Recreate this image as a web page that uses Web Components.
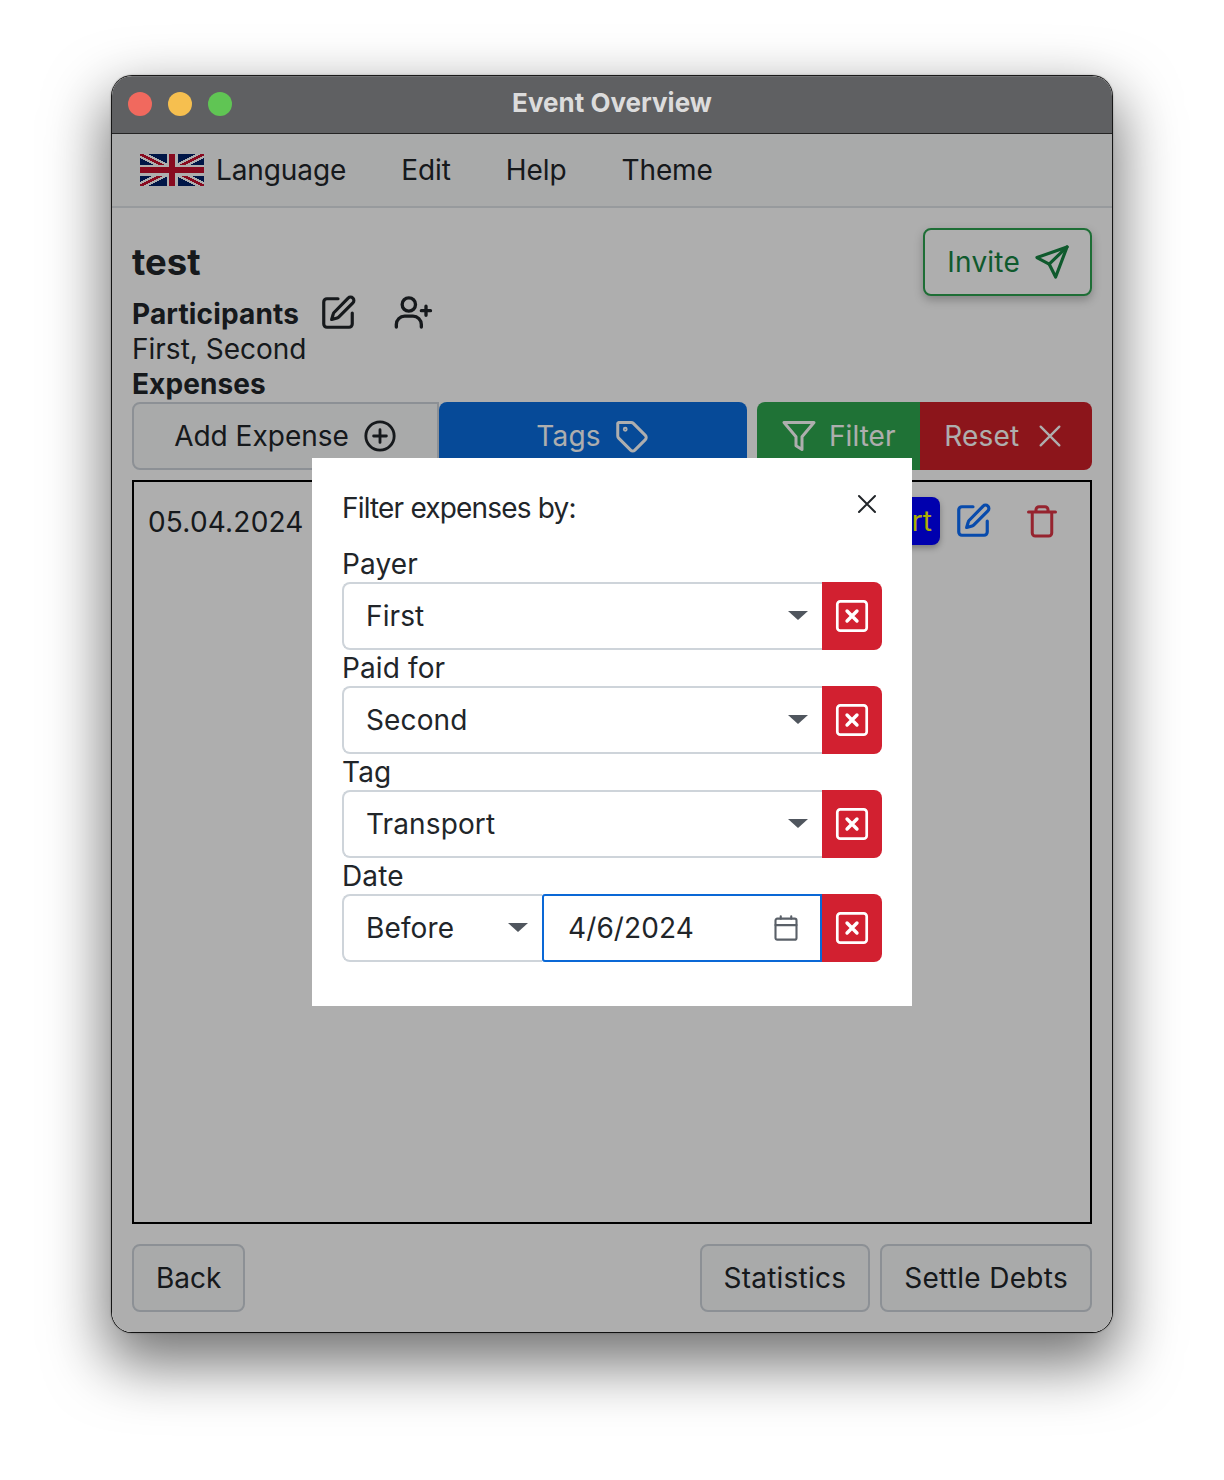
<!DOCTYPE html>
<html lang="en"><head><meta charset="utf-8"><title>Event Overview</title>
<style>
html,body{margin:0;background:#fff}
body{font-family:Inter,"Liberation Sans",sans-serif;font-optical-sizing:none;color:#212529;height:1480px;display:flex;justify-content:center;align-items:flex-start;padding-top:76px;box-sizing:border-box;overflow:hidden}
</style></head><body>
<x-window>
  <x-titlebar>Event Overview</x-titlebar>
  <x-menubar>
    <x-flag slot="flag"></x-flag>
    <x-menuitem first>Language</x-menuitem>
    <x-menuitem>Edit</x-menuitem>
    <x-menuitem>Help</x-menuitem>
    <x-menuitem>Theme</x-menuitem>
  </x-menubar>
  <x-overview></x-overview>
  <x-filter-modal slot="overlay"></x-filter-modal>
</x-window>
<script>
const I={
 pen:'<path d="M12 3H5a2 2 0 0 0-2 2v14a2 2 0 0 0 2 2h14a2 2 0 0 0 2-2v-7"/><path d="M18.4 2.6a2.1 2.1 0 0 1 3 3l-9 9a2 2 0 0 1-.9.5l-3.500 1 1-3.500a2 2 0 0 1 .5-.9z"/>',
 user:'<circle cx="9.500" cy="7.500" r="4"/><path d="M2 21v-1.500a5 5 0 0 1 5-5h5a5 5 0 0 1 5 5V21"/><path d="M19.800 8.500v5.500M17 11.200h5.500"/>',
 send:'<path d="M21.500 2.500 2.500 9.200l7.700 4.100 4.100 8.200z"/><path d="M21.500 2.500 10.200 13.300"/>',
 plus:'<circle cx="12" cy="12" r="10"/><path d="M12 7.500v9M7.500 12h9"/>',
 tag:'<path d="M3 3h8.500a2 2 0 0 1 1.400.6l8 8a2 2 0 0 1 0 2.800l-7 7a2 2 0 0 1-2.800 0l-8-8A2 2 0 0 1 2.500 12V3.500z"/><circle cx="7.500" cy="7.500" r=".6"/>',
 funnel:'<path d="M2 3h20l-8 9.500V21l-4-2.500v-6z"/>',
 x:'<path d="M4 4l16 16M20 4 4 20"/>',
 trash:'<path d="M3 6h18M8 6V4.500A2 2 0 0 1 10 2.500h4a2 2 0 0 1 2 2V6M5.500 6v14a2 2 0 0 0 2 2h9a2 2 0 0 0 2-2V6"/>',
 cal:'<rect x="3" y="4" width="18" height="18" rx="1.500"/><path d="M3 9.500h18M7.500 2v2M16.500 2v2"/>',
 xsq:'<rect x="2.200" y="2.200" width="19.600" height="19.600" rx="2"/><path stroke-width="2.300" d="M8.700 8.700l6.600 6.600M15.300 8.700l-6.600 6.600"/>'
};
const ico=(n,s,w=2)=>`<svg width="${s}" height="${s}" viewBox="0 0 24 24" fill="none" stroke="currentColor" stroke-width="${w}" stroke-linecap="round" stroke-linejoin="round" aria-hidden="true">${I[n]}</svg>`;
function def(name,html){
  customElements.define(name,class extends HTMLElement{
    constructor(){super();const r=this.attachShadow({mode:'open'});if(typeof html!=='function')r.innerHTML=html;}
    connectedCallback(){if(!this.__d&&typeof html==='function'){this.__d=1;this.shadowRoot.innerHTML=html(this);}}
  });
}
def('x-window',`<style>
:host{display:flex;flex-direction:column;position:relative;width:1000px;height:1256px;border-radius:20px;background:#fff;
 box-shadow:0 0 0 1px rgba(0,0,0,.85),0 0 2px 1px rgba(0,0,0,.3),0 26px 60px 6px rgba(0,0,0,.55)}
.clip{display:flex;flex-direction:column;flex:1;min-height:0;border-radius:20px;overflow:hidden;position:relative}
.over{position:absolute;left:0;right:0;top:58px;bottom:0;background:rgba(0,0,0,.318);display:flex;flex-direction:column;align-items:center;padding-top:324px;box-sizing:border-box}
</style><div class="clip"><slot></slot><div class="over"><slot name="overlay"></slot></div></div>`);
def('x-titlebar',`<style>
:host{display:flex;align-items:center;justify-content:center;position:relative;height:57px;flex:none;background:#5f6062;border-bottom:1px solid #242424;color:#dcdcdc;font:700 26px/1 Inter,sans-serif;font-optical-sizing:auto;box-shadow:inset 0 1px 0 rgba(255,255,255,.12)}
.l{position:absolute;left:16px;top:16px;display:flex;gap:16px}
i{display:block;width:24px;height:24px;border-radius:50%}
.t{margin-top:-4px}
</style><div class="l"><i style="background:#f1695e"></i><i style="background:#f6bf4f"></i><i style="background:#60c554"></i></div><div class="t"><slot></slot></div>`);
def('x-menubar',`<style>
:host{display:flex;align-items:center;flex:none;height:74px;box-sizing:border-box;background:#f8f9fa;border-bottom:2px solid #dee2e6;padding:0 0 0 28px;font:28px/1 Inter,sans-serif;letter-spacing:-.1px;color:#212529}
::slotted(x-flag){margin-right:12px}
.g{display:flex;align-items:center;gap:55px}
</style><slot name="flag"></slot><div class="g"><slot></slot></div>`);
def('x-menuitem',`<style>:host{display:block;margin-top:-1px}</style><slot></slot>`);
def('x-flag',`<style>:host{display:block;width:64px;height:32px;line-height:0}</style>
<svg width="64" height="32" viewBox="0 0 64 32" shape-rendering="crispEdges"><rect width="64" height="32" fill="#012169"/>
<path d="M0 0 64 32M64 0 0 32" stroke="#fff" stroke-width="7"/><path d="M0 0 30 15M34 17 64 32M64 0 35 14.500M29 17.500 0 32" stroke="#c8102e" stroke-width="2.500"/>
<path d="M32 0v32M0 16h64" stroke="#fff" stroke-width="11"/><path d="M32 0v32M0 16h64" stroke="#c8102e" stroke-width="6.500"/></svg>`);
def('x-btn',h=>{
 const i=h.getAttribute('icon'),s=h.getAttribute('size')||32,w=h.getAttribute('sw')||2,lead=h.hasAttribute('lead');
 const svg=i?ico(i,s,w):'';
 return `<style>
:host{display:flex;align-items:center;justify-content:center;gap:${h.getAttribute('gap')||14}px;height:68px;min-width:0;box-sizing:border-box;padding:0 22px;font:28px/1 Inter,sans-serif;letter-spacing:.22px;border:2px solid transparent;border-radius:${h.getAttribute('r')||'8px'};white-space:nowrap;flex:${h.hasAttribute('grow')?'1 1 0':'none'}}
:host([v=sec]){background:#f8f9fa;border-color:#ced4da;color:#212529}
:host([v=inv]){background:#fff;border-color:#2da24f;color:#178443;box-shadow:0 4px 10px rgba(0,0,0,.25)}
:host([v=blue]){background:#0a6ddf;color:#fff}
:host([v=green]){background:#2ea84f;color:#fff}
:host([v=red]){background:#ce1f28;color:#fff}
svg{display:block;flex:none}
</style>${lead?svg:''}<slot></slot>${lead?'':svg}`});
def('x-overview',`<style>
:host{display:flex;flex-direction:column;flex:1;min-height:0;background:#fff;padding:20px;box-sizing:border-box;font:28px/35px Inter,sans-serif;color:#212529}
.head{display:flex;justify-content:space-between;align-items:flex-start;height:174px;flex:none}
h1{font:700 36.500px/36px Inter,sans-serif;margin:16px 0 17px}
.r{display:flex;align-items:center;font-weight:700;height:35px;letter-spacing:.15px}
.r span{margin-right:20px}.r svg{display:block;margin-top:-4px}
.r svg+svg{margin-left:36px;margin-top:-6px}
b{display:block;font-weight:700;letter-spacing:.1px}
.bar{display:flex;gap:10px;flex:none}
.left{display:flex;width:615px;flex:none}.right{display:flex;flex:1;min-width:0}
.list{flex:1;min-height:0;border:2px solid #000;margin:10px 0 20px;box-sizing:border-box;padding:15px 14px;display:flex;align-items:flex-start}
.date{margin-top:8px;flex:none;letter-spacing:.2px}
.end{margin-left:auto;display:flex;align-items:center}
.badge{background:#0000ff;color:#ffff00;border-radius:8px;height:48px;line-height:48px;padding:0 8px;box-shadow:0 3px 6px rgba(0,0,0,.3)}
.ed{color:#0d6efd;margin-left:14px}.tr{color:#dc3545;margin-left:32px;margin-right:16px}
.ed svg,.tr svg{display:block}
.foot{display:flex;gap:10px;flex:none}.sp{flex:1}
</style>
<div class="head"><div><h1>test</h1><div class="r"><span>Participants</span>${ico('pen',38,2)}${ico('user',40,2)}</div><div>First, Second</div><b>Expenses</b></div>
<x-btn v="inv" icon="send" size="38" sw="2" gap="13" style="padding-right:19px">Invite</x-btn></div>
<div class="bar"><div class="left"><x-btn v="sec" icon="plus" size="34" gap="14" grow r="8px 0 0 8px" style="flex:0 0 307px;letter-spacing:0">Add Expense</x-btn><x-btn v="blue" icon="tag" size="36" grow r="8px 8px 0 0" gap="13">Tags</x-btn></div>
<div class="right"><x-btn v="green" icon="funnel" size="36" lead gap="12" r="8px 0 0 8px" style="letter-spacing:.05px">Filter</x-btn><x-btn v="red" icon="x" size="28" grow r="0 8px 8px 0" gap="17" style="padding-right:25px">Reset</x-btn></div></div>
<div class="list"><div class="date">05.04.2024</div><div class="end"><div class="badge">Transport</div><div class="ed">${ico('pen',38,2)}</div><div class="tr">${ico('trash',36,2)}</div></div></div>
<div class="foot"><x-btn v="sec" style="letter-spacing:0">Back</x-btn><div class="sp"></div><x-btn v="sec">Statistics</x-btn><x-btn v="sec" style="letter-spacing:.3px">Settle Debts</x-btn></div>`);
def('x-select',`<style>
:host{display:flex;align-items:center;flex:1;min-width:0;height:68px;box-sizing:border-box;background:#fff;border:2px solid #ced4da;border-right:0;border-radius:8px 0 0 8px;padding:0 14px 0 22px;font:28px/1 Inter,sans-serif;letter-spacing:.12px;color:#212529}
:host([narrow]){flex:none;width:200px}
.t{flex:1}
i{display:block;width:0;height:0;border:10px solid transparent;border-top:9px solid #50565e;border-bottom:0;margin-bottom:1px}
</style><div class="t"><slot></slot></div><i></i>`);
def('x-date',`<style>
:host{display:flex;align-items:center;flex:1;min-width:0;height:68px;box-sizing:border-box;background:#fff;border:2px solid #0a68d6;border-radius:3px 0 0 3px;padding:0 20px 0 24px;font:28px/1 Inter,sans-serif;letter-spacing:.1px;color:#212529}
.t{flex:1}svg{display:block;color:#5a6068}
</style><div class="t"><slot></slot></div>${ico('cal',28,1.8)}`);
def('x-clear',`<style>
:host{display:flex;align-items:center;justify-content:center;flex:none;width:60px;height:68px;background:#d22030;border-radius:0 8px 8px 0;color:#fff}
svg{display:block}</style>${ico('xsq',36,1.800)}`);
def('x-field',`<style>
:host{display:block;font:28px/36px Inter,sans-serif;letter-spacing:.12px;color:#212529}
.row{display:flex}
</style><div><slot name="label"></slot></div><div class="row"><slot></slot><x-clear></x-clear></div>`);
def('x-filter-modal',`<style>
:host{display:block;width:600px;height:548px;box-sizing:border-box;background:#fff;padding:30px;flex:none;position:relative;font-family:Inter,sans-serif;color:#212529}
.h{display:flex;justify-content:space-between;align-items:flex-start;height:58px}
h2{margin:0;font:400 28px/40px Inter,sans-serif;font-optical-sizing:auto;letter-spacing:-.82px}
.c{display:block;margin:4px 3px 0 0}.c svg{display:block}
</style>
<div class="h"><h2>Filter expenses by:</h2><div class="c">${ico('x',24,2)}</div></div>
<x-field><span slot="label">Payer</span><x-select>First</x-select></x-field>
<x-field><span slot="label">Paid for</span><x-select>Second</x-select></x-field>
<x-field><span slot="label">Tag</span><x-select>Transport</x-select></x-field>
<x-field><span slot="label">Date</span><x-select narrow>Before</x-select><x-date>4/6/2024</x-date></x-field>`);
</script>
</body></html>
